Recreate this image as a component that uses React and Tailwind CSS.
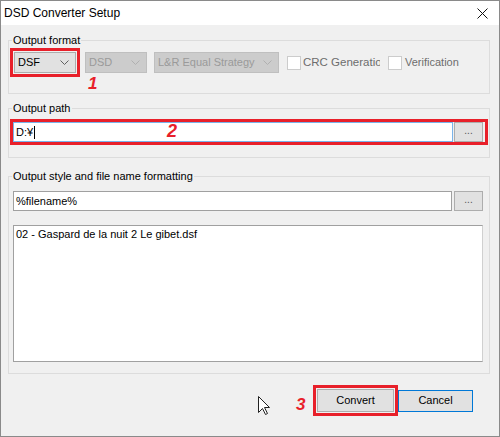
import React from "react";

function Chevron({ color = "#606060" }) {
  return (
    <svg width="9" height="5" viewBox="0 0 9 5" className="shrink-0">
      <path d="M0.5 0.5 L4.5 4.5 L8.5 0.5" fill="none" stroke={color} strokeWidth="1" />
    </svg>
  );
}

function Group({ label, className = "", children }) {
  return (
    <fieldset className={`border border-[#dcdcdc] px-[4px] ${className}`}>
      <legend className="-ml-[1px] px-[1px] text-[11px] leading-[14px] text-black">{label}</legend>
      {children}
    </fieldset>
  );
}

function Anno({ className, children }) {
  return (
    <span
      className={`absolute leading-none font-bold italic text-[#e8202a] font-['Liberation_Sans',Arial,sans-serif] ${className}`}
    >
      {children}
    </span>
  );
}

export default function App() {
  return (
    <div className="relative w-[500px] h-[437px] overflow-hidden bg-[#f0f0f0] border border-[#8a8a8a] flex flex-col font-['Liberation_Sans',Arial,sans-serif] text-[11px] text-black">
      {/* Title bar */}
      <div className="h-[24px] bg-white flex items-center justify-between pl-[3px] pr-[11px] shrink-0">
        <span className="text-[12px] leading-none text-black">DSD Converter Setup</span>
        <svg width="11" height="11" viewBox="0 0 11 11">
          <path d="M0.5 0.5 L10.5 10.5 M10.5 0.5 L0.5 10.5" stroke="#111" strokeWidth="1" />
        </svg>
      </div>

      <div className="flex flex-col pl-[7px] pr-[9px]">
        {/* Output format */}
        <Group label="Output format" className="mt-[8px] pt-[5px] pb-[20px]">
          <div className="flex items-center">
            <div className="ml-[1px] w-[62px] h-[21px] bg-[#e1e1e1] border border-[#adadad] flex items-center justify-between pl-[3px] pr-[6px] outline-solid outline-[3px] outline-offset-[1px] outline-[#e8202a]">
              <span>DSF</span>
              <Chevron />
            </div>
            <div className="ml-[9px] w-[62px] h-[21px] bg-[#cccccc] border border-[#bfbfbf] flex items-center justify-between pl-[3px] pr-[6px] text-[#9a9a9a]">
              <span>DSD</span>
              <Chevron color="#b0b0b0" />
            </div>
            <div className="ml-[7px] w-[125px] h-[21px] bg-[#cccccc] border border-[#bfbfbf] flex items-center justify-between pl-[3px] pr-[6px] text-[#9a9a9a]">
              <span>L&amp;R Equal Strategy</span>
              <Chevron color="#b0b0b0" />
            </div>
            <div className="ml-[8px] w-[14px] h-[14px] bg-white border border-[#cccccc] shrink-0" />
            <div className="ml-[2px] w-[77px] overflow-hidden whitespace-nowrap text-[#6d6d6d] text-[11.5px]">CRC Generation</div>
            <div className="ml-[8px] w-[14px] h-[14px] bg-white border border-[#cccccc] shrink-0" />
            <div className="ml-[3px] whitespace-nowrap text-[#6d6d6d]">Verification</div>
          </div>
        </Group>

        {/* Output path */}
        <Group label="Output path" className="mt-[7px] pt-[7px] pb-[15px]">
          <div className="flex items-center pr-[2px] outline-solid outline-[3px] outline-offset-0 outline-[#e8202a]">
            <div className="w-[440px] h-[20px] bg-white border border-[#7ab4ea] flex items-center pl-[2px]">
              <span>D:¥</span>
              <span className="w-[1px] h-[13px] bg-black ml-[1px]" />
            </div>
            <div className="ml-[1px] w-[29px] h-[20px] bg-[#e1e1e1] border border-[#adadad] flex items-center justify-center text-[10px] text-[#555] leading-none pb-[2px]">
              ...
            </div>
          </div>
        </Group>

        {/* Output style */}
        <Group label="Output style and file name formatting" className="mt-[11px] pt-[8px] pb-[11px]">
          <div className="flex items-center">
            <div className="w-[439px] h-[20px] bg-white border border-[#a0a0a0] flex items-center pl-[2px]">
              %filename%
            </div>
            <div className="ml-[2px] w-[29px] h-[20px] bg-[#e1e1e1] border border-[#adadad] flex items-center justify-center text-[10px] text-[#555] leading-none pb-[2px]">
              ...
            </div>
          </div>
          <div className="mt-[14px] w-[470px] h-[137px] bg-white border border-[#a0a0a0] border-r-[#d0d0d0] pl-[2px] pt-[2px] leading-[13px]">
            02 - Gaspard de la nuit 2 Le gibet.dsf
          </div>
        </Group>

        {/* Buttons */}
        <div className="mt-[15px] flex justify-end items-center pr-[17px]">
          <button className="w-[77px] h-[23px] bg-[#e1e1e1] border border-[#adadad] text-[11px] text-black outline-solid outline-[3px] outline-offset-[1px] outline-[#e8202a]">
            Convert
          </button>
          <button className="ml-[4px] w-[75px] h-[22px] bg-[#e1e1e1] border border-[#0078d7] text-[11px] text-black">
            Cancel
          </button>
        </div>
      </div>

      {/* Annotations */}
      <Anno className="left-[87px] top-[74px] text-[17px]">1</Anno>
      <Anno className="left-[166px] top-[121px] text-[18px]">2</Anno>
      <Anno className="left-[295px] top-[395px] text-[17px]">3</Anno>

      {/* Mouse cursor */}
      <svg className="absolute left-[257px] top-[395px]" width="13" height="20" viewBox="0 0 13 20">
        <path
          d="M0.5 0.5 L0.5 16.5 L4.5 12.5 L7.5 18.5 L9.5 17.5 L6.5 11.5 L11.5 11.5 Z"
          fill="#ffffff"
          stroke="#222"
          strokeWidth="1"
          strokeLinejoin="miter"
        />
      </svg>
    </div>
  );
}
